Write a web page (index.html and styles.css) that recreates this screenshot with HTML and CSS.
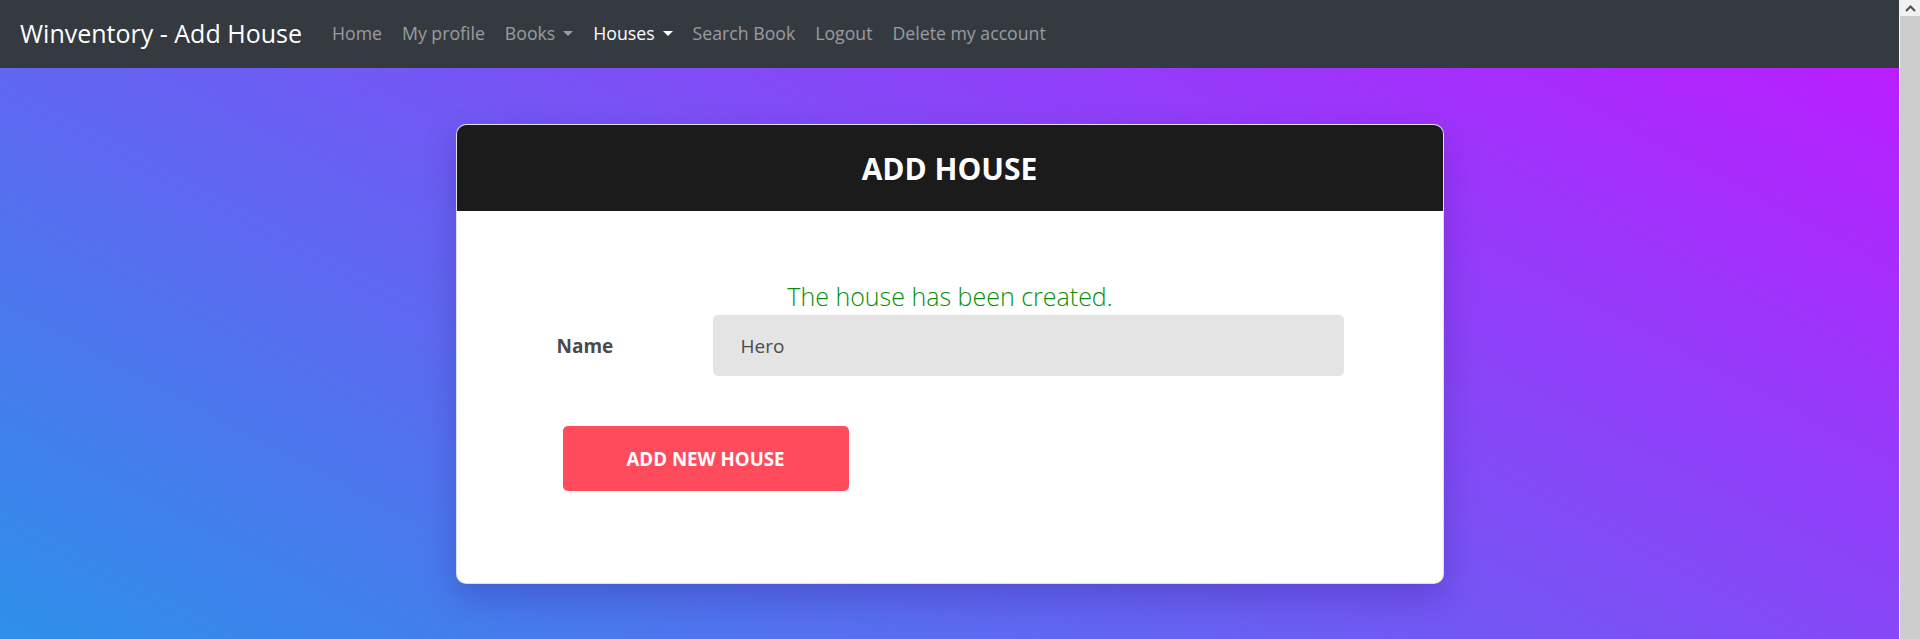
FILE: index.html
```html
<!DOCTYPE html>
<html lang="en">
<head>
<meta charset="utf-8">
<title>Winventory - Add House</title>
<link rel="stylesheet" href="styles.css">
</head>
<body>
<div class="app">
  <nav class="navbar">
    <a class="brand" href="#">Winventory - Add House</a>
    <ul class="nav">
      <li><a class="nav-link" href="#">Home</a></li>
      <li><a class="nav-link" href="#">My profile</a></li>
      <li><a class="nav-link dropdown" href="#">Books</a></li>
      <li><a class="nav-link dropdown active" href="#">Houses</a></li>
      <li><a class="nav-link" href="#">Search Book</a></li>
      <li><a class="nav-link" href="#">Logout</a></li>
      <li><a class="nav-link" href="#">Delete my account</a></li>
    </ul>
  </nav>
  <main class="page">
    <section class="card">
      <header class="card-header">
        <h1 class="card-title">ADD HOUSE</h1>
      </header>
      <div class="card-body">
        <p class="message">The house has been created.</p>
        <form class="form">
          <div class="form-row">
            <label class="form-label" for="name">Name</label>
            <input class="form-input" id="name" type="text" value="Hero">
          </div>
          <button class="btn-submit" type="button">ADD NEW HOUSE</button>
        </form>
      </div>
    </section>
  </main>
</div>
<div class="scrollbar" aria-hidden="true">
  <div class="scroll-up">
    <svg width="11" height="7" viewBox="0 0 11 7"><polyline points="1,6 5.5,1.5 10,6" fill="none" stroke="#505050" stroke-width="2"/></svg>
  </div>
  <div class="scroll-thumb"></div>
</div>
</body>
</html>
```

FILE: styles.css
```css
body {
  margin: 0;
  font-family: "Open Sans", "Noto Sans", sans-serif;
  display: flex;
  height: 639px;
  overflow: hidden;
}

.app {
  flex: 1;
  min-width: 0;
  display: flex;
  flex-direction: column;
}

.scrollbar {
  width: 21px;
  flex: none;
  display: flex;
  flex-direction: column;
  background: #f1f1f1;
}

.scroll-up {
  height: 16px;
  display: flex;
  align-items: center;
  justify-content: center;
  padding-left: 1px;
}

.scroll-thumb {
  flex: 1;
  background: #cdcdcd;
  border-left: 1px solid #fafafa;
}

.navbar {
  height: 68px;
  flex: none;
  box-sizing: border-box;
  background: #343a40;
  display: flex;
  align-items: center;
  padding: 0 20px 2px;
}

.brand {
  font-size: 25px;
  color: #fff;
  text-decoration: none;
  margin-right: 20px;
  white-space: nowrap;
}

.nav {
  display: flex;
  list-style: none;
  margin: 0;
  padding: 0;
}

.nav-link {
  display: block;
  padding: 0 10px;
  font-size: 17.7px;
  color: rgba(255, 255, 255, 0.5);
  text-decoration: none;
  white-space: nowrap;
}

.nav-link.active {
  color: #fff;
}

.dropdown::after {
  content: "";
  display: inline-block;
  margin-left: 8px;
  vertical-align: 4px;
  border-top: 5px solid;
  border-left: 5px solid transparent;
  border-right: 5px solid transparent;
}

.page {
  flex: 1;
  padding-top: 56px;
  box-sizing: border-box;
  background: linear-gradient(28deg, #2d90e9 0%, #b91eff 100%);
}

.card {
  width: 986px;
  margin: 0 auto;
  background: #fff;
  border: 1px solid rgba(0, 0, 0, 0.125);
  border-radius: 10px;
  box-shadow: 0 14px 32px rgba(40, 20, 120, 0.25);
}

.card-header {
  height: 86px;
  background: #1b1b1b;
  border-radius: 9px 9px 0 0;
  display: flex;
  align-items: center;
  justify-content: center;
}

.card-title {
  margin: 0;
  font-size: 30px;
  font-weight: 700;
  color: #fff;
}

.card-body {
  padding: 67px 99px 92px 100px;
}

.message {
  margin: 0;
  text-align: center;
  font-size: 25px;
  font-weight: 300;
  line-height: 36px;
  color: #088f08;
}

.form-row {
  display: grid;
  grid-template-columns: 156px 1fr;
  align-items: center;
  margin-top: 1px;
}

.form-label {
  font-size: 19px;
  font-weight: 700;
  color: #4a4a4a;
}

.form-input {
  height: 61px;
  box-sizing: border-box;
  border: none;
  border-radius: 5px;
  background: #e4e4e4;
  padding: 0 28px;
  font-family: "Open Sans", "Noto Sans", sans-serif;
  font-size: 19px;
  color: #4a4a4a;
  outline: none;
}

.btn-submit {
  display: block;
  margin: 50px 0 0 6px;
  width: 286px;
  height: 65px;
  border: none;
  border-radius: 5px;
  background: #ff4b5c;
  color: #fff;
  font-family: "Open Sans", "Noto Sans", sans-serif;
  font-size: 18.7px;
  font-weight: 700;
}
```
